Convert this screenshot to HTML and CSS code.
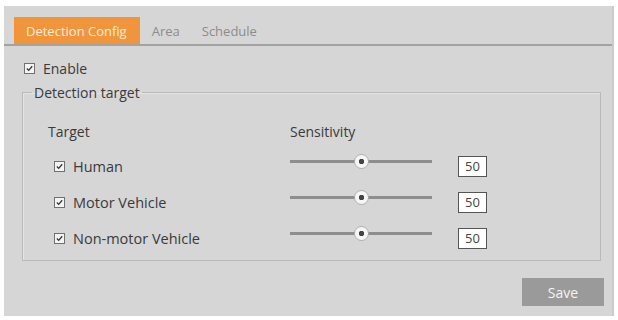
FILE: index.html
```html
<!DOCTYPE html>
<html lang="en">
<head>
    <meta charset="UTF-8">
    <meta name="viewport" content="width=device-width, initial-scale=1.0">
    <title>Detection Config</title>

    <link rel="stylesheet" href="styles.css">
</head>
<body>
    <section class="panel">
        <nav class="tabs">
            <span class="tab active">Detection Config</span>
            <span class="tab">Area</span>
            <span class="tab">Schedule</span>
        </nav>

        <label class="check enable">
            <span class="box"><svg viewBox="0 0 11 11"><path d="M2.3 5.6 L4.5 7.8 L8.8 2.8" /></svg></span>
            Enable
        </label>

        <fieldset class="targets">
            <legend>Detection target</legend>

            <div class="grid">
                <span class="head">Target</span>
                <span class="head">Sensitivity</span>
                <span></span>

                <label class="check">
                    <span class="box"><svg viewBox="0 0 11 11"><path d="M2.3 5.6 L4.5 7.8 L8.8 2.8" /></svg></span>
                    Human
                </label>
                <input type="range" class="slider" min="0" max="100" value="50">
                <input type="text" class="num" value="50">

                <label class="check">
                    <span class="box"><svg viewBox="0 0 11 11"><path d="M2.3 5.6 L4.5 7.8 L8.8 2.8" /></svg></span>
                    Motor Vehicle
                </label>
                <input type="range" class="slider" min="0" max="100" value="50">
                <input type="text" class="num" value="50">

                <label class="check">
                    <span class="box"><svg viewBox="0 0 11 11"><path d="M2.3 5.6 L4.5 7.8 L8.8 2.8" /></svg></span>
                    Non-motor Vehicle
                </label>
                <input type="range" class="slider" min="0" max="100" value="50">
                <input type="text" class="num" value="50">
            </div>
        </fieldset>

        <div class="actions">
            <button type="button" class="save">Save</button>
        </div>
    </section>
</body>
</html>
```

FILE: styles.css
```css
body {
    margin: 0;
    background-color: #fff;

    font-family: 'Open Sans', 'Noto Sans', sans-serif;
    font-size: 14px;
    color: #3a3a3a;
}

.panel {
    margin: 6px 4px 0 4px;
    width: 610px;
    height: 310px;
    box-sizing: border-box;

    background-color: #d6d6d6;
    border-right: 2px solid #cbcbcb;

    display: flex;
    flex-direction: column;
}

.tabs {
    margin-top: 11px;
    padding-left: 10px;

    border-bottom: 2px solid #a3a3a3;

    display: flex;
}

.tab {
    height: 27px;
    padding: 0 10px 0 12px;

    font-size: 13px;
    color: #8c8c8c;

    display: flex;
    align-items: center;
}

.tab.active {
    padding: 0 13px 0 12px;
    background-color: #f0953b;
    color: #fbeedd;
}

.check {
    display: flex;
    align-items: center;
    gap: 8px;
}

.check .box {
    width: 11px;
    height: 11px;
    box-sizing: border-box;

    background-color: #f4f4f4;
    border: 1px solid #707070;

    display: flex;
}

.check .box svg {
    width: 100%;
    height: 100%;
    fill: none;
    stroke: #333;
    stroke-width: 1.6;
}

.enable {
    margin: 14px 0 0 20px;
    height: 16px;
}

.targets {
    margin: 7px 0 0 18px;
    padding: 20px 0 0 25px;
    width: 579px;
    height: 178px;
    box-sizing: border-box;

    border: 1px solid #b9b9b9;
    box-shadow: inset 1px 1px 0 #e4e4e4;
}

.targets legend {
    margin-left: -16px;
    padding: 0 2px;
}

.grid {
    display: grid;
    grid-template-columns: 216px 142px 29px;
    grid-template-rows: 26px repeat(3, 36px);
    column-gap: 26px;
    align-items: center;
}

.grid .head {
    align-self: start;
}

.grid .check {
    padding-left: 6px;
    font-size: 14.5px;
}

.slider {
    -webkit-appearance: none;
    appearance: none;
    margin: 0 0 9px 0;
    width: 142px;
    height: 16px;
    background: transparent;
}

.slider::-webkit-slider-runnable-track {
    height: 3px;
    background-color: #8e8e8e;
}

.slider::-webkit-slider-thumb {
    -webkit-appearance: none;
    margin-top: -6px;
    width: 15px;
    height: 15px;
    border-radius: 50%;

    background: radial-gradient(circle, #444 0 2.5px, #f6f6f6 3px);
    border: 1px solid #b0b0b0;
    box-sizing: border-box;
}

.num {
    width: 29px;
    height: 21px;
    padding: 0;
    box-sizing: border-box;

    background-color: #fff;
    border: 1px solid #555;

    font-family: inherit;
    font-size: 13px;
    color: #444;
    text-align: center;
}

.actions {
    margin-top: 17px;
    padding-right: 8px;

    display: flex;
    justify-content: flex-end;
}

.save {
    width: 82px;
    height: 28px;

    background-color: #9a9a9a;
    border: none;

    font-family: inherit;
    font-size: 14px;
    color: #f4f4f4;
}
```
